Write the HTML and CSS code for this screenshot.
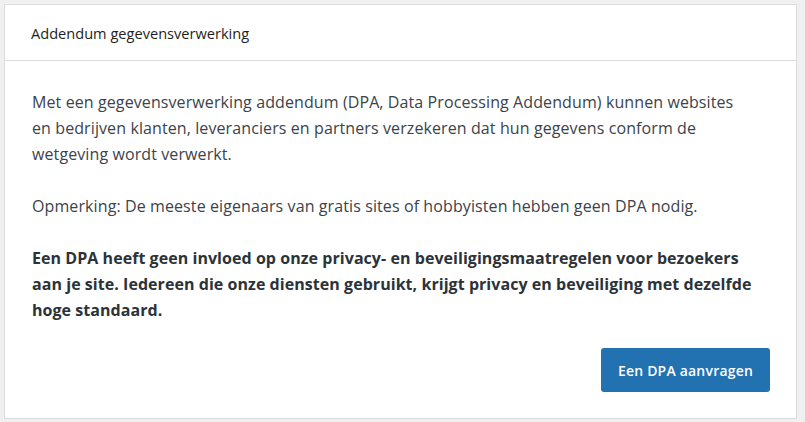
FILE: index.html
```html
<!DOCTYPE html>
<html lang="nl">
<head>
<meta charset="utf-8">
<link rel="stylesheet" href="styles.css">
</head>
<body>
<div class="card">
  <div class="card-header">Addendum gegevensverwerking</div>
  <div class="card-body">
    <p>Met een gegevensverwerking addendum (DPA, Data Processing Addendum) kunnen websites en bedrijven klanten, leveranciers en partners verzekeren dat hun gegevens conform de wetgeving wordt verwerkt.</p>
    <p>Opmerking: De meeste eigenaars van gratis sites of hobbyisten hebben geen DPA nodig.</p>
    <p class="strong">Een DPA heeft geen invloed op onze privacy- en beveiligingsmaatregelen voor bezoekers aan je site. Iedereen die onze diensten gebruikt, krijgt privacy en beveiliging met dezelfde hoge standaard.</p>
    <div class="actions">
      <button class="btn">Een DPA aanvragen</button>
    </div>
  </div>
</div>
</body>
</html>
```

FILE: styles.css
```css
html, body {
  margin: 0;
  padding: 0;
}
body {
  background: #f0f0f1;
  padding: 4px 8px 4px 4px;
  font-family: "Open Sans", "Noto Sans", sans-serif;
  color: #3c434a;
}
.card {
  background: #fff;
  border: 1px solid #dcdcde;
  box-sizing: border-box;
  height: 415px;
}
.card-header {
  height: 56px;
  box-sizing: border-box;
  border-bottom: 1px solid #dcdcde;
  display: flex;
  align-items: center;
  padding: 0 26px;
  font-size: 14.6px;
  color: #1e1e1e;
}
.card-body {
  padding: 28px 26px 0 27px;
}
.card-body p {
  margin: 0 0 26px;
  max-width: 724px;
  font-size: 16px;
  line-height: 26px;
  letter-spacing: 0.1px;
}
.card-body p.strong {
  font-weight: 700;
  color: #2c3338;
  margin-bottom: 25px;
  letter-spacing: 0.05px;
}
.actions {
  display: flex;
  justify-content: flex-end;
}
.btn {
  background: #2271b1;
  color: #fff;
  border: none;
  border-radius: 3px;
  height: 44px;
  width: 169px;
  font-family: inherit;
  font-size: 14px;
  font-weight: 600;
  letter-spacing: 0.2px;
  padding: 0;
}
```
